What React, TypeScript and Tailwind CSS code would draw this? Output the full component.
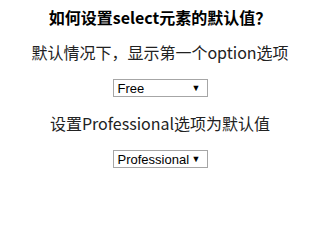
import React from "react";

function FakeSelect({ value }: { value: string }) {
  return (
    <div className="flex h-[18px] w-[95px] items-center justify-between border border-[#a6a6a6] bg-white pl-[4px] pr-[6px] font-['Liberation_Sans',Arial,sans-serif] text-[13px] leading-none text-black">
      <span>{value}</span>
      <span className="text-[9px]">▼</span>
    </div>
  );
}

export default function App() {
  return (
    <div className="flex min-h-[200px] w-full flex-col items-center bg-white font-['Noto_Sans_CJK_SC','Noto_Sans',sans-serif] text-[#222]">
      <h1 className="mt-[7px] text-[16px] font-bold leading-[20px] text-black">
        如何设置select元素的默认值？
      </h1>
      <p className="mt-[15px] text-[16px] leading-[20px]">
        默认情况下，显示第一个option选项
      </p>
      <div className="mt-[17px]">
        <FakeSelect value="Free" />
      </div>
      <p className="mt-[16px] text-[16px] leading-[20px]">
        设置Professional选项为默认值
      </p>
      <div className="mt-[17px]">
        <FakeSelect value="Professional" />
      </div>
    </div>
  );
}
